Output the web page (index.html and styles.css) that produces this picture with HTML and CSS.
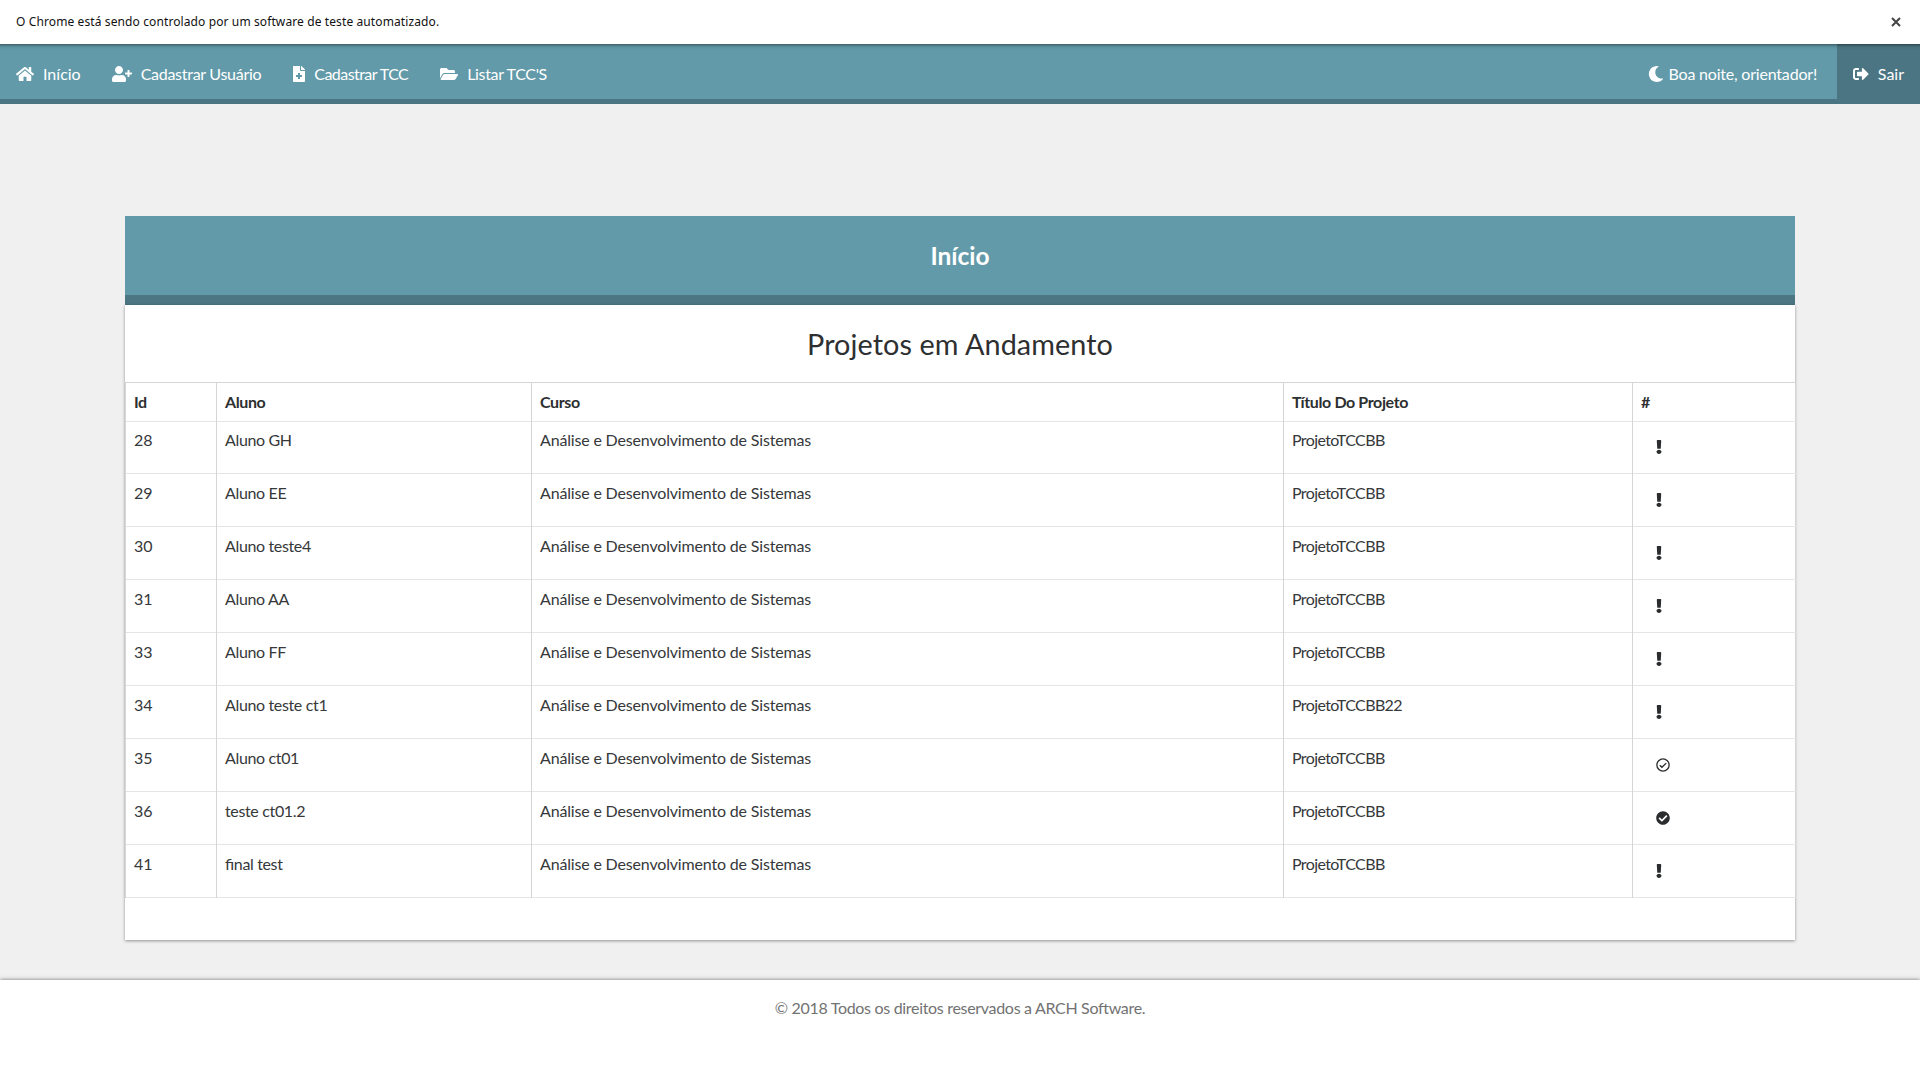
FILE: index.html
```html
<!DOCTYPE html>
<html lang="pt-BR">
<head>
<meta charset="utf-8">
<title>Início</title>
<link rel="stylesheet" href="styles.css">
</head>
<body>
<svg class="sprite" aria-hidden="true">
  <symbol id="exclamation" viewBox="0 0 192 512" preserveAspectRatio="none"><path d="M176 432c0 44.112-35.888 80-80 80s-80-35.888-80-80 35.888-80 80-80 80 35.888 80 80zM25.26 25.199l13.6 272C39.499 309.972 50.041 320 62.83 320h66.34c12.789 0 23.331-10.028 23.97-22.801l13.6-272C167.425 11.49 156.496 0 142.77 0H49.23C35.504 0 24.575 11.49 25.26 25.199z"/></symbol>
  <symbol id="check-solid" viewBox="0 0 512 512"><path d="M504 256c0 136.967-111.033 248-248 248S8 392.967 8 256 119.033 8 256 8s248 111.033 248 248zM227.314 387.314l184-184c6.248-6.248 6.248-16.379 0-22.627l-22.627-22.627c-6.248-6.249-16.379-6.249-22.628 0L216 308.118l-70.059-70.059c-6.248-6.248-16.379-6.248-22.628 0l-22.627 22.627c-6.248 6.248-6.248 16.379 0 22.627l104 104c6.249 6.249 16.379 6.249 22.628.001z"/></symbol>
  <symbol id="check-outline" viewBox="0 0 512 512"><circle cx="256" cy="256" r="224" fill="none" stroke="currentColor" stroke-width="48"/><path d="M139 262l78 79 156-154" fill="none" stroke="currentColor" stroke-width="50"/></symbol>
</svg>

<div class="infobar">
  <span>O Chrome está sendo controlado por um software de teste automatizado.</span>
  <svg class="close" viewBox="0 0 10 10"><path d="M1 1l8 8M9 1l-8 8"/></svg>
</div>

<nav class="nav">
  <a class="item"><svg class="icon w18" viewBox="0 0 576 512"><path d="M488 312.7V456c0 13.3-10.7 24-24 24H348c-6.6 0-12-5.4-12-12V356c0-6.6-5.4-12-12-12h-72c-6.6 0-12 5.4-12 12v112c0 6.6-5.4 12-12 12H112c-13.3 0-24-10.7-24-24V312.7c0-3.6 1.6-7 4.4-9.3l188-154.8c4.4-3.6 10.8-3.6 15.3 0l188 154.8c2.7 2.3 4.3 5.7 4.3 9.3zm83.6-60.9L488 182.9V44.4c0-6.6-5.4-12-12-12h-56c-6.6 0-12 5.4-12 12V117l-89.5-73.7c-17.7-14.6-43.3-14.6-61 0L4.4 251.8c-5.1 4.2-5.8 11.8-1.6 16.9l25.5 31c4.2 5.1 11.8 5.8 16.9 1.6l235.2-193.7c4.4-3.6 10.8-3.6 15.3 0l235.2 193.7c5.1 4.2 12.7 3.5 16.9-1.6l25.5-31c4.2-5.2 3.4-12.7-1.7-16.9z"/></svg><span>Início</span></a>
  <a class="item user"><svg class="icon w20" viewBox="0 0 640 512"><path d="M624 208h-64v-64c0-8.8-7.2-16-16-16h-32c-8.8 0-16 7.2-16 16v64h-64c-8.8 0-16 7.2-16 16v32c0 8.8 7.2 16 16 16h64v64c0 8.8 7.2 16 16 16h32c8.8 0 16-7.2 16-16v-64h64c8.8 0 16-7.2 16-16v-32c0-8.8-7.2-16-16-16zm-400 48c70.7 0 128-57.3 128-128S294.7 0 224 0 96 57.3 96 128s57.3 128 128 128zm89.6 32h-16.7c-22.2 10.2-46.9 16-72.9 16s-50.6-5.8-72.9-16h-16.7C60.2 288 0 348.2 0 422.4V464c0 26.5 21.5 48 48 48h352c26.5 0 48-21.5 48-48v-41.6c0-74.2-60.2-134.4-134.4-134.4z"/></svg><span>Cadastrar Usuário</span></a>
  <a class="item tcc"><svg class="icon w12" viewBox="0 0 384 512"><path d="M377 105L279.1 7c-4.5-4.5-10.6-7-17-7H256v128h128v-6.1c0-6.3-2.5-12.4-7-16.9zm-153 31V0H24C10.7 0 0 10.7 0 24v464c0 13.3 10.7 24 24 24h336c13.3 0 24-10.7 24-24V160H248c-13.2 0-24-10.8-24-24zm64 160v48c0 4.4-3.6 8-8 8h-56v56c0 4.4-3.6 8-8 8h-48c-4.4 0-8-3.6-8-8v-56h-56c-4.4 0-8-3.6-8-8v-48c0-4.4 3.6-8 8-8h56v-56c0-4.4 3.6-8 8-8h48c4.4 0 8 3.6 8 8v56h56c4.4 0 8 3.6 8 8z"/></svg><span>Cadastrar TCC</span></a>
  <a class="item list"><svg class="icon w18" viewBox="0 0 576 512"><path d="M572.694 292.093L500.27 416.248A63.997 63.997 0 0 1 444.989 448H45.025c-18.523 0-30.064-20.093-20.731-36.093l72.424-124.155A64 64 0 0 1 152 256h399.964c18.523 0 30.064 20.093 20.73 36.093zM152 224h328v-48c0-26.51-21.49-48-48-48H272l-64-64H48C21.49 64 0 85.49 0 112v278.046l69.077-118.418C86.214 242.25 117.989 224 152 224z"/></svg><span>Listar TCC'S</span></a>
  <span class="greeting"><svg class="icon w16" viewBox="0 0 512 512"><path d="M283.211 512c78.962 0 151.079-35.925 198.857-94.792 7.068-8.708-.639-21.43-11.562-19.35-124.203 23.654-238.262-71.576-238.262-196.954 0-72.222 38.662-138.635 101.498-174.394 9.686-5.512 7.25-20.197-3.756-22.23A258.156 258.156 0 0 0 283.211 0c-141.309 0-256 114.511-256 256 0 141.309 114.511 256 256 256z"/></svg><span>Boa noite, orientador!</span></span>
  <a class="item exit"><svg class="icon w16" viewBox="0 0 512 512"><path d="M497 273L329 441c-15 15-41 4.5-41-17v-96H152c-13.3 0-24-10.7-24-24v-96c0-13.3 10.7-24 24-24h136V88c0-21.4 25.9-32 41-17l168 168c9.3 9.4 9.3 24.6 0 34zM192 436v-40c0-6.6-5.4-12-12-12H96c-17.7 0-32-14.3-32-32V160c0-17.7 14.3-32 32-32h84c6.6 0 12-5.4 12-12V76c0-6.6-5.4-12-12-12H96c-53 0-96 43-96 96v192c0 53 43 96 96 96h84c6.6 0 12-5.4 12-12z"/></svg><span>Sair</span></a>
</nav>

<main class="main">
  <header class="card-header"><h1>Início</h1></header>
  <section class="card">
    <h2>Projetos em Andamento</h2>
    <table>
      <colgroup><col class="c-id"><col class="c-name"><col class="c-course"><col class="c-title"><col class="c-status"></colgroup>
      <thead><tr><th>Id</th><th>Aluno</th><th>Curso</th><th>Título Do Projeto</th><th>#</th></tr></thead>
      <tbody>
        <tr><td>28</td><td>Aluno GH</td><td>Análise e Desenvolvimento de Sistemas</td><td>ProjetoTCCBB</td><td><svg class="mark"><use href="#exclamation"/></svg></td></tr>
        <tr><td>29</td><td>Aluno EE</td><td>Análise e Desenvolvimento de Sistemas</td><td>ProjetoTCCBB</td><td><svg class="mark"><use href="#exclamation"/></svg></td></tr>
        <tr><td>30</td><td>Aluno teste4</td><td>Análise e Desenvolvimento de Sistemas</td><td>ProjetoTCCBB</td><td><svg class="mark"><use href="#exclamation"/></svg></td></tr>
        <tr><td>31</td><td>Aluno AA</td><td>Análise e Desenvolvimento de Sistemas</td><td>ProjetoTCCBB</td><td><svg class="mark"><use href="#exclamation"/></svg></td></tr>
        <tr><td>33</td><td>Aluno FF</td><td>Análise e Desenvolvimento de Sistemas</td><td>ProjetoTCCBB</td><td><svg class="mark"><use href="#exclamation"/></svg></td></tr>
        <tr><td>34</td><td>Aluno teste ct1</td><td>Análise e Desenvolvimento de Sistemas</td><td>ProjetoTCCBB22</td><td><svg class="mark"><use href="#exclamation"/></svg></td></tr>
        <tr><td>35</td><td>Aluno ct01</td><td>Análise e Desenvolvimento de Sistemas</td><td>ProjetoTCCBB</td><td><svg class="mark round"><use href="#check-outline"/></svg></td></tr>
        <tr><td>36</td><td>teste ct01.2</td><td>Análise e Desenvolvimento de Sistemas</td><td>ProjetoTCCBB</td><td><svg class="mark round"><use href="#check-solid"/></svg></td></tr>
        <tr><td>41</td><td>final test</td><td>Análise e Desenvolvimento de Sistemas</td><td>ProjetoTCCBB</td><td><svg class="mark"><use href="#exclamation"/></svg></td></tr>
      </tbody>
    </table>
  </section>
</main>

<footer class="footer">© 2018 Todos os direitos reservados a ARCH Software.</footer>
</body>
</html>
```
FILE: styles.css
```css
* { box-sizing: border-box; }

body {
  margin: 0;
  height: 1080px;
  display: flex;
  flex-direction: column;
  background: #f0f0f0;
  color: #2d2f31;
  font: 16px/22px Lato, "Noto Sans", sans-serif;
  font-feature-settings: "liga" 1;
  overflow: hidden;
}

svg { fill: currentColor; }
.sprite { display: none; }

.infobar {
  flex: none;
  height: 44px;
  padding: 0 19px 0 16px;
  display: flex;
  align-items: center;
  justify-content: space-between;
  background: #fff;
  color: #111;
  font: 12px/46px "Noto Sans", sans-serif;
  letter-spacing: 0.11px;
}
.close {
  width: 10px;
  height: 10px;
  stroke: #444;
  stroke-width: 2;
}

.nav {
  flex: none;
  height: 60px;
  display: flex;
  background: linear-gradient(#3f626c, #5b909e 3px, #629aa9 6px);
  border-bottom: 5px solid #4b7583;
  color: #fff;
  line-height: 60px;
  white-space: nowrap;
}
.item {
  display: flex;
  gap: 9px;
  padding: 0 16px;
}
.icon {
  height: 16px;
  margin-top: 22px;
}
.w12 { width: 12px; }
.w16 { width: 16px; }
.w18 { width: 18px; }
.w20 { width: 20px; }
.user { margin-left: -1px; letter-spacing: -0.28px; }
.tcc { letter-spacing: -0.55px; }
.list { letter-spacing: -0.34px; }
.greeting {
  display: flex;
  gap: 4px;
  margin-left: auto;
  padding-right: 20px;
  letter-spacing: -0.2px;
}
.exit {
  width: 83px;
  height: 60px;
  background: linear-gradient(#2f4b54, #466e7b 3px, #4b7583 6px);
}

.main {
  flex: none;
  width: 1670px;
  margin: 112px auto 40px;
}
.card-header {
  height: 89px;
  background: #629aa9;
  border-bottom: 10px solid #4b7682;
  color: #fff;
  text-align: center;
}
h1 {
  margin: 0;
  font-size: 24.5px;
  line-height: 80px;
}
.card {
  height: 635px;
  background: #fff;
  box-shadow: 0 1px 3px rgba(0, 0, 0, 0.4);
}
h2 {
  margin: 0;
  padding-top: 1px;
  font-size: 28.8px;
  font-weight: 400;
  line-height: 76px;
  letter-spacing: 0.08px;
  text-align: center;
}

table {
  width: 1670px;
  table-layout: fixed;
  border-collapse: collapse;
  border: 1px solid #d3d6d8;
  border-bottom-color: #e3e5e7;
}
.c-id { width: 91px; }
.c-name { width: 315px; }
.c-course { width: 752px; }
.c-title { width: 349px; }
.c-status { width: 163px; }
th, td {
  border-left: 1px solid #d3d6d8;
  text-align: left;
  vertical-align: top;
}
th {
  height: 39px;
  padding: 8px;
  letter-spacing: -0.39px;
}
td {
  height: 53px;
  padding: 8px 8px 0;
  border-top: 1px solid #e3e5e7;
  color: #36383a;
}
td:nth-child(2) { letter-spacing: -0.35px; }
td:nth-child(3) { letter-spacing: -0.17px; }
td:nth-child(4) { letter-spacing: -0.6px; }
tbody tr:first-child td {
  height: 52px;
  padding-top: 7px;
}
.mark {
  display: block;
  width: 6px;
  height: 14px;
  margin: 11px 0 0 15px;
  color: #2a2c2e;
}
.round { width: 14px; }

.footer {
  flex: 1;
  padding-top: 17px;
  background: #fff;
  box-shadow: 0 0 4px rgba(0, 0, 0, 0.55);
  color: #727272;
  letter-spacing: -0.31px;
  text-align: center;
}
```
